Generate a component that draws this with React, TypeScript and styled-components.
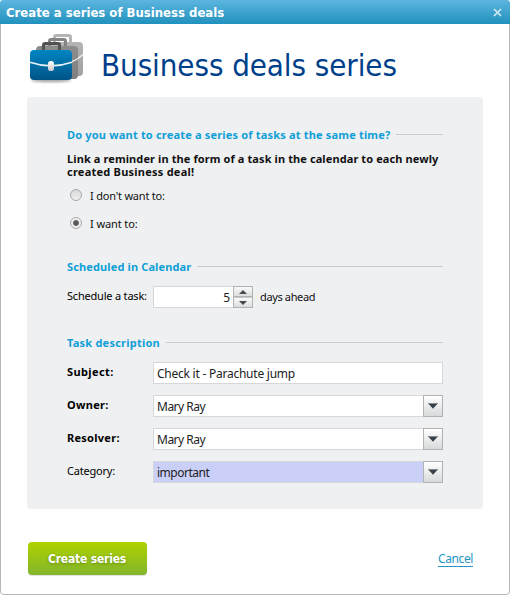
import React from "react";
import styled, { createGlobalStyle } from "styled-components";

const Global = createGlobalStyle`
  * { box-sizing: border-box; }
  body { margin: 0; background: #fff; }
`;

const Dialog = styled.div`
  width: 510px;
  height: 595px;
  display: flex;
  flex-direction: column;
  overflow: hidden;
  border-radius: 3px 3px 4px 4px;
  background: #fff;
  color: #111;
  font-family: "Noto Sans", "Open Sans", sans-serif;
  font-size: 11px;
`;

const TitleBar = styled.header`
  height: 24px;
  flex: none;
  display: flex;
  align-items: center;
  justify-content: space-between;
  padding: 1px 8px 0 6px;
  background: linear-gradient(#5cb5df, #2191bd);
  color: #fff;
  font: bold 13px/22px "DejaVu Sans Condensed", "DejaVu Sans", sans-serif;
`;

const Close = styled.button`
  display: flex;
  padding: 0;
  border: 0;
  background: none;
`;

const Content = styled.main`
  flex: 1;
  padding: 9px 26px 0;
  border: 1px solid #b5b6b8;
  border-top: 0;
  border-radius: 0 0 4px 4px;
`;

const Heading = styled.div`
  height: 64px;
  display: flex;
  gap: 16px;
`;

const HeadingText = styled.h1`
  margin: 13px 0 0;
  color: #003f8a;
  font: 400 31px/38px "DejaVu Sans Condensed", "DejaVu Sans", sans-serif;
  letter-spacing: -0.08px;
  white-space: nowrap;
`;

const Panel = styled.section`
  height: 412px;
  padding: 29px 40px 0;
  border-radius: 4px;
  background: #eff0f2;
`;

const SectionTitle = styled.h2<{ $spacing: number; $top?: number }>`
  display: flex;
  align-items: center;
  gap: 6px;
  height: 16px;
  margin: ${(p) => p.$top ?? 0}px 0 0;
  color: #109fd6;
  font-size: 11px;
  line-height: 16px;
  letter-spacing: ${(p) => p.$spacing}px;
  white-space: nowrap;
  &::after {
    content: "";
    flex: 1;
    height: 1px;
    background: #cacbcd;
  }
`;

const TitleText = styled.span`
  padding-top: 2px;
`;

const Intro = styled.p`
  margin: 10px 0 3px;
  font-weight: 700;
  line-height: 13px;
  white-space: nowrap;
`;

const Spaced = styled.span<{ $spacing: number }>`
  letter-spacing: ${(p) => p.$spacing}px;
`;

const RadioRow = styled.label`
  display: flex;
  align-items: center;
  gap: 8px;
  height: 28px;
  padding-left: 3px;
  white-space: nowrap;
`;

const RadioMark = styled.span<{ $checked?: boolean }>`
  width: 12px;
  height: 12px;
  border: 1px solid #aaa;
  border-radius: 50%;
  background: ${(p) =>
    p.$checked
      ? "radial-gradient(circle, #5a5a5a 0 2.4px, #eee 3.4px)"
      : "linear-gradient(#d8d8d8, #f0f0f0)"};
`;

const FieldRow = styled.div<{ $top: number }>`
  display: flex;
  height: 22px;
  margin-top: ${(p) => p.$top}px;
`;

const Label = styled.label<{ $bold?: boolean; $spacing: number }>`
  width: 86px;
  flex: none;
  line-height: 20px;
  color: #000;
  font-weight: ${(p) => (p.$bold ? 700 : 400)};
  letter-spacing: ${(p) => p.$spacing}px;
  white-space: nowrap;
`;

const Box = styled.div<{ $width?: number; $end?: boolean; $joined?: boolean; $selected?: boolean; $spacing: number }>`
  flex: ${(p) => (p.$width ? "none" : 1)};
  width: ${(p) => (p.$width ? `${p.$width}px` : "auto")};
  padding: ${(p) => (p.$end ? "0 3px 0 0" : "0 0 0 3px")};
  border: 1px solid #d6d7da;
  ${(p) => p.$joined && "border-right: 0;"}
  background: ${(p) => (p.$selected ? "#cacff8" : "#fff")};
  color: #222;
  font-size: 12px;
  line-height: 21px;
  letter-spacing: ${(p) => p.$spacing}px;
  text-align: ${(p) => (p.$end ? "right" : "left")};
  white-space: nowrap;
`;

const DropButton = styled.button`
  width: 20px;
  display: flex;
  align-items: center;
  justify-content: center;
  padding: 0;
  border: 1px solid #b1b2b4;
  background: linear-gradient(#fff, #d8d9da);
`;

const Stepper = styled.div`
  width: 20px;
  display: grid;
  grid-template-rows: 11px 11px;
`;

const StepButton = styled.button`
  display: flex;
  align-items: center;
  justify-content: center;
  padding: 0;
  border: 1px solid #b1b2b4;
  background: linear-gradient(#fafafa, #dcddde);
  & + & { border-top-color: #c6c7c9; }
`;

const Suffix = styled.span`
  margin-left: 7px;
  line-height: 22px;
  letter-spacing: -0.36px;
`;

const Footer = styled.footer`
  display: flex;
  align-items: center;
  justify-content: space-between;
  margin-top: 33px;
  padding: 0 10px 0 1px;
`;

const Submit = styled.button`
  width: 119px;
  height: 33px;
  padding: 2px 1px 0 0;
  border: 0;
  border-radius: 4px;
  background: linear-gradient(#b0d200, #82b52c);
  box-shadow: 0 1px 1px #ddd;
  color: #fff;
  font: bold 12px/31px "DejaVu Sans Condensed", "DejaVu Sans", sans-serif;
  letter-spacing: -0.2px;
  text-shadow: 0 1px 3px rgba(70, 110, 0, 0.6);
`;

const Cancel = styled.a`
  margin-top: 1px;
  border-bottom: 1px solid #2696c4;
  color: #2696c4;
  font-size: 12px;
  line-height: 14px;
  letter-spacing: -0.4px;
`;

const Briefcases = () => (
  <svg width="58" height="52" viewBox="0 0 58 52">
    <defs>
      <linearGradient id="blue" x2="0" y2="1">
        <stop stopColor="#0086c4" />
        <stop offset="1" stopColor="#005487" />
      </linearGradient>
      <linearGradient id="mid" x2="0" y2="1">
        <stop stopColor="#8c8c8c" />
        <stop offset="1" stopColor="#808080" />
      </linearGradient>
      <linearGradient id="back" x2="0" y2="1">
        <stop stopColor="#b4b4b4" />
        <stop offset="1" stopColor="#a0a0a0" />
      </linearGradient>
      <linearGradient id="clasp" x2="0" y2="1">
        <stop stopColor="#fff" />
        <stop offset="1" stopColor="#c8c8c8" />
      </linearGradient>
      <filter id="soft" x="-20%" y="-100%" width="140%" height="300%">
        <feGaussianBlur stdDeviation="1.2" />
      </filter>
    </defs>
    <ellipse cx="24" cy="47.5" rx="20" ry="1.8" fill="#777" opacity="0.65" filter="url(#soft)" />
    <path d="M27.5 10V4.2q0-1.7 1.7-1.7h12.600q1.700 0 1.700 1.700V10" fill="none" stroke="#b5b5b5" strokeWidth="3" />
    <rect x="16" y="9" width="40" height="34" rx="4" fill="url(#back)" />
    <path d="M49 26q4-1.500 7-4.500" fill="none" stroke="#eee" strokeWidth="1.500" />
    <path d="M22.500 14V8.200q0-1.700 1.700-1.700h12.600q1.700 0 1.700 1.700V14" fill="none" stroke="#858585" strokeWidth="3" />
    <rect x="9" y="13" width="42" height="33" rx="4" fill="url(#mid)" />
    <path d="M45 28.500q3-1 6-3" fill="none" stroke="#eee" strokeWidth="1.500" />
    <path d="M16.500 18v-5.800q0-1.700 1.700-1.700h12.600q1.700 0 1.700 1.700V18" fill="none" stroke="#505254" strokeWidth="3" />
    <rect x="3" y="17" width="42" height="30" rx="4" fill="url(#blue)" />
    <path d="M3 29.300Q24 36.500 45 29.300" fill="none" stroke="#e8f2f8" strokeWidth="1.600" />
    <rect x="21" y="28" width="6" height="10" rx="2.800" fill="url(#clasp)" />
  </svg>
);

const DownArrow = () => (
  <svg width="10" height="6" viewBox="0 0 10 6">
    <path d="M0 .3h10L5 5.700Z" fill="#374149" />
    <path d="M0 .5h10" stroke="#858a8e" />
  </svg>
);

const SmallArrow = ({ up }: { up?: boolean }) => (
  <svg width="8" height="4" viewBox="0 0 8 4">
    <path d={up ? "M0 4h8L4 0Z" : "M0 0h8L4 4Z"} fill="#454b50" />
  </svg>
);

interface SelectProps {
  label: string;
  value: string;
  labelSpacing: number;
  bold?: boolean;
  selected?: boolean;
}

const SelectField = ({ label, value, labelSpacing, bold, selected }: SelectProps) => (
  <FieldRow $top={11}>
    <Label $bold={bold} $spacing={labelSpacing}>{label}</Label>
    <Box $joined $selected={selected} $spacing={-0.5}>{value}</Box>
    <DropButton aria-label={label}><DownArrow /></DropButton>
  </FieldRow>
);

export default function App() {
  return (
    <Dialog>
      <Global />
      <TitleBar>
        Create a series of Business deals
        <Close aria-label="Close">
          <svg width="9" height="9" viewBox="0 0 9 9">
            <path d="M1 1l7 7M8 1L1 8" stroke="#d3e8f2" strokeWidth="1.7" />
          </svg>
        </Close>
      </TitleBar>
      <Content>
        <Heading>
          <Briefcases />
          <HeadingText>Business deals series</HeadingText>
        </Heading>
        <Panel>
          <SectionTitle $spacing={0.18}>
            <TitleText>Do you want to create a series of tasks at the same time?</TitleText>
          </SectionTitle>
          <Intro>
            <Spaced $spacing={0.1}>Link a reminder in the form of a task in the calendar to each newly</Spaced>
            <br />
            <Spaced $spacing={0.24}>created Business deal!</Spaced>
          </Intro>
          <RadioRow>
            <RadioMark />
            <Spaced $spacing={-0.2}>I don't want to:</Spaced>
          </RadioRow>
          <RadioRow>
            <RadioMark $checked />
            <Spaced $spacing={-0.1}>I want to:</Spaced>
          </RadioRow>
          <SectionTitle $spacing={0.13} $top={21}>
            <TitleText>Scheduled in Calendar</TitleText>
          </SectionTitle>
          <FieldRow $top={12}>
            <Label $spacing={-0.2}>Schedule a task:</Label>
            <Box $width={80} $end $joined $spacing={0}>5</Box>
            <Stepper>
              <StepButton aria-label="Increase"><SmallArrow up /></StepButton>
              <StepButton aria-label="Decrease"><SmallArrow /></StepButton>
            </Stepper>
            <Suffix>days ahead</Suffix>
          </FieldRow>
          <SectionTitle $spacing={0.23} $top={26}>
            <TitleText>Task description</TitleText>
          </SectionTitle>
          <FieldRow $top={12}>
            <Label $bold $spacing={0.4}>Subject:</Label>
            <Box $spacing={-0.24}>Check it - Parachute jump</Box>
          </FieldRow>
          <SelectField label="Owner:" value="Mary Ray" labelSpacing={0.3} bold />
          <SelectField label="Resolver:" value="Mary Ray" labelSpacing={0.27} bold />
          <SelectField label="Category:" value="important" labelSpacing={-0.2} selected />
        </Panel>
        <Footer>
          <Submit>Create series</Submit>
          <Cancel>Cancel</Cancel>
        </Footer>
      </Content>
    </Dialog>
  );
}
